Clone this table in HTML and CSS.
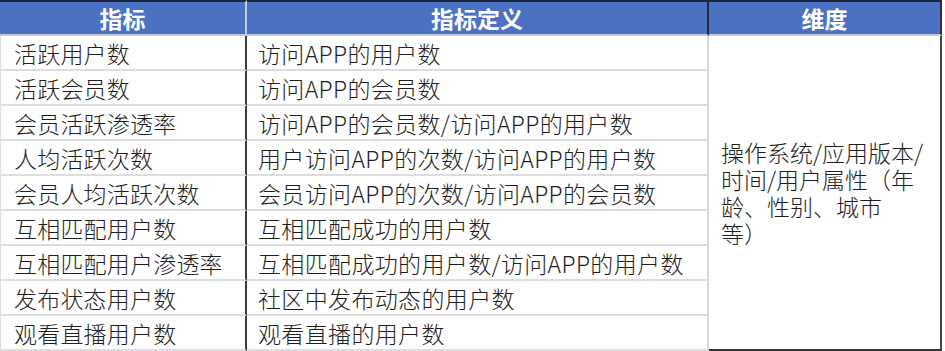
FILE: index.html
```html
<!DOCTYPE html>
<html lang="zh-CN">
<head>
<meta charset="utf-8">
<title>指标定义</title>
<link rel="stylesheet" href="styles.css">
</head>
<body>
<div class="sheet">
  <div class="hd hd-1">指标</div>
  <div class="hd hd-2">指标定义</div>
  <div class="hd hd-3">维度</div>

  <div class="c1">活跃用户数</div>
  <div class="c2">访问APP的用户数</div>
  <div class="c3">
    <span class="ln">操作系统/应用版本/</span>
    <span class="ln">时间/用户属性（年</span>
    <span class="ln">龄、性别、城市</span>
    <span class="ln">等）</span>
  </div>

  <div class="c1">活跃会员数</div>
  <div class="c2">访问APP的会员数</div>

  <div class="c1">会员活跃渗透率</div>
  <div class="c2">访问APP的会员数/访问APP的用户数</div>

  <div class="c1">人均活跃次数</div>
  <div class="c2">用户访问APP的次数/访问APP的用户数</div>

  <div class="c1">会员人均活跃次数</div>
  <div class="c2">会员访问APP的次数/访问APP的会员数</div>

  <div class="c1">互相匹配用户数</div>
  <div class="c2">互相匹配成功的用户数</div>

  <div class="c1">互相匹配用户渗透率</div>
  <div class="c2">互相匹配成功的用户数/访问APP的用户数</div>

  <div class="c1">发布状态用户数</div>
  <div class="c2">社区中发布动态的用户数</div>

  <div class="c1">观看直播用户数</div>
  <div class="c2">观看直播的用户数</div>
</div>
</body>
</html>
```

FILE: styles.css
```css
html, body {
  margin: 0;
  padding: 0;
  background: #ffffff;
}

.sheet {
  display: grid;
  grid-template-columns: 247px 462px 233px;
  grid-template-rows: 36px repeat(9, 35px);
  width: 942px;
  font-family: "Noto Sans CJK SC", "Noto Sans", sans-serif;
  font-size: 23px;
  font-weight: 300;
  color: #1e1e1e;
}

.sheet > div {
  box-sizing: border-box;
  display: flex;
  align-items: center;
  white-space: nowrap;
}

.hd {
  background: #4a71c2;
  color: #ffffff;
  font-weight: bold;
  justify-content: center;
  border-top: 2px solid #1d2640;
  border-bottom: 2px solid #c6c8d2;
  line-height: 1;
}

.hd-1 {
  border-right: 2px solid #c3cbe0;
}

.hd-2 {
  border-right: 2px solid #23283a;
}

.hd-3 {
  border-right: 2px solid #2e2e34;
}

.c1 {
  grid-column: 1;
  padding-left: 13px;
  letter-spacing: 0.2px;
  border-left: 1px solid #dedee2;
  border-right: 2px solid #3a3a3e;
  border-bottom: 2px solid #dcdce1;
}

.c2 {
  grid-column: 2;
  padding-left: 11px;
  letter-spacing: 0.35px;
  border-right: 2px solid #d6d6dc;
  border-bottom: 2px solid #dcdce1;
}

.c3 {
  grid-column: 3;
  grid-row: 2 / span 9;
  flex-direction: column;
  justify-content: center;
  align-items: flex-start !important;
  padding-left: 12px;
  line-height: 27px;
  border-right: 2px solid #454548;
  border-bottom: 2px solid #333338;
}

.ln {
  display: block;
}
```
